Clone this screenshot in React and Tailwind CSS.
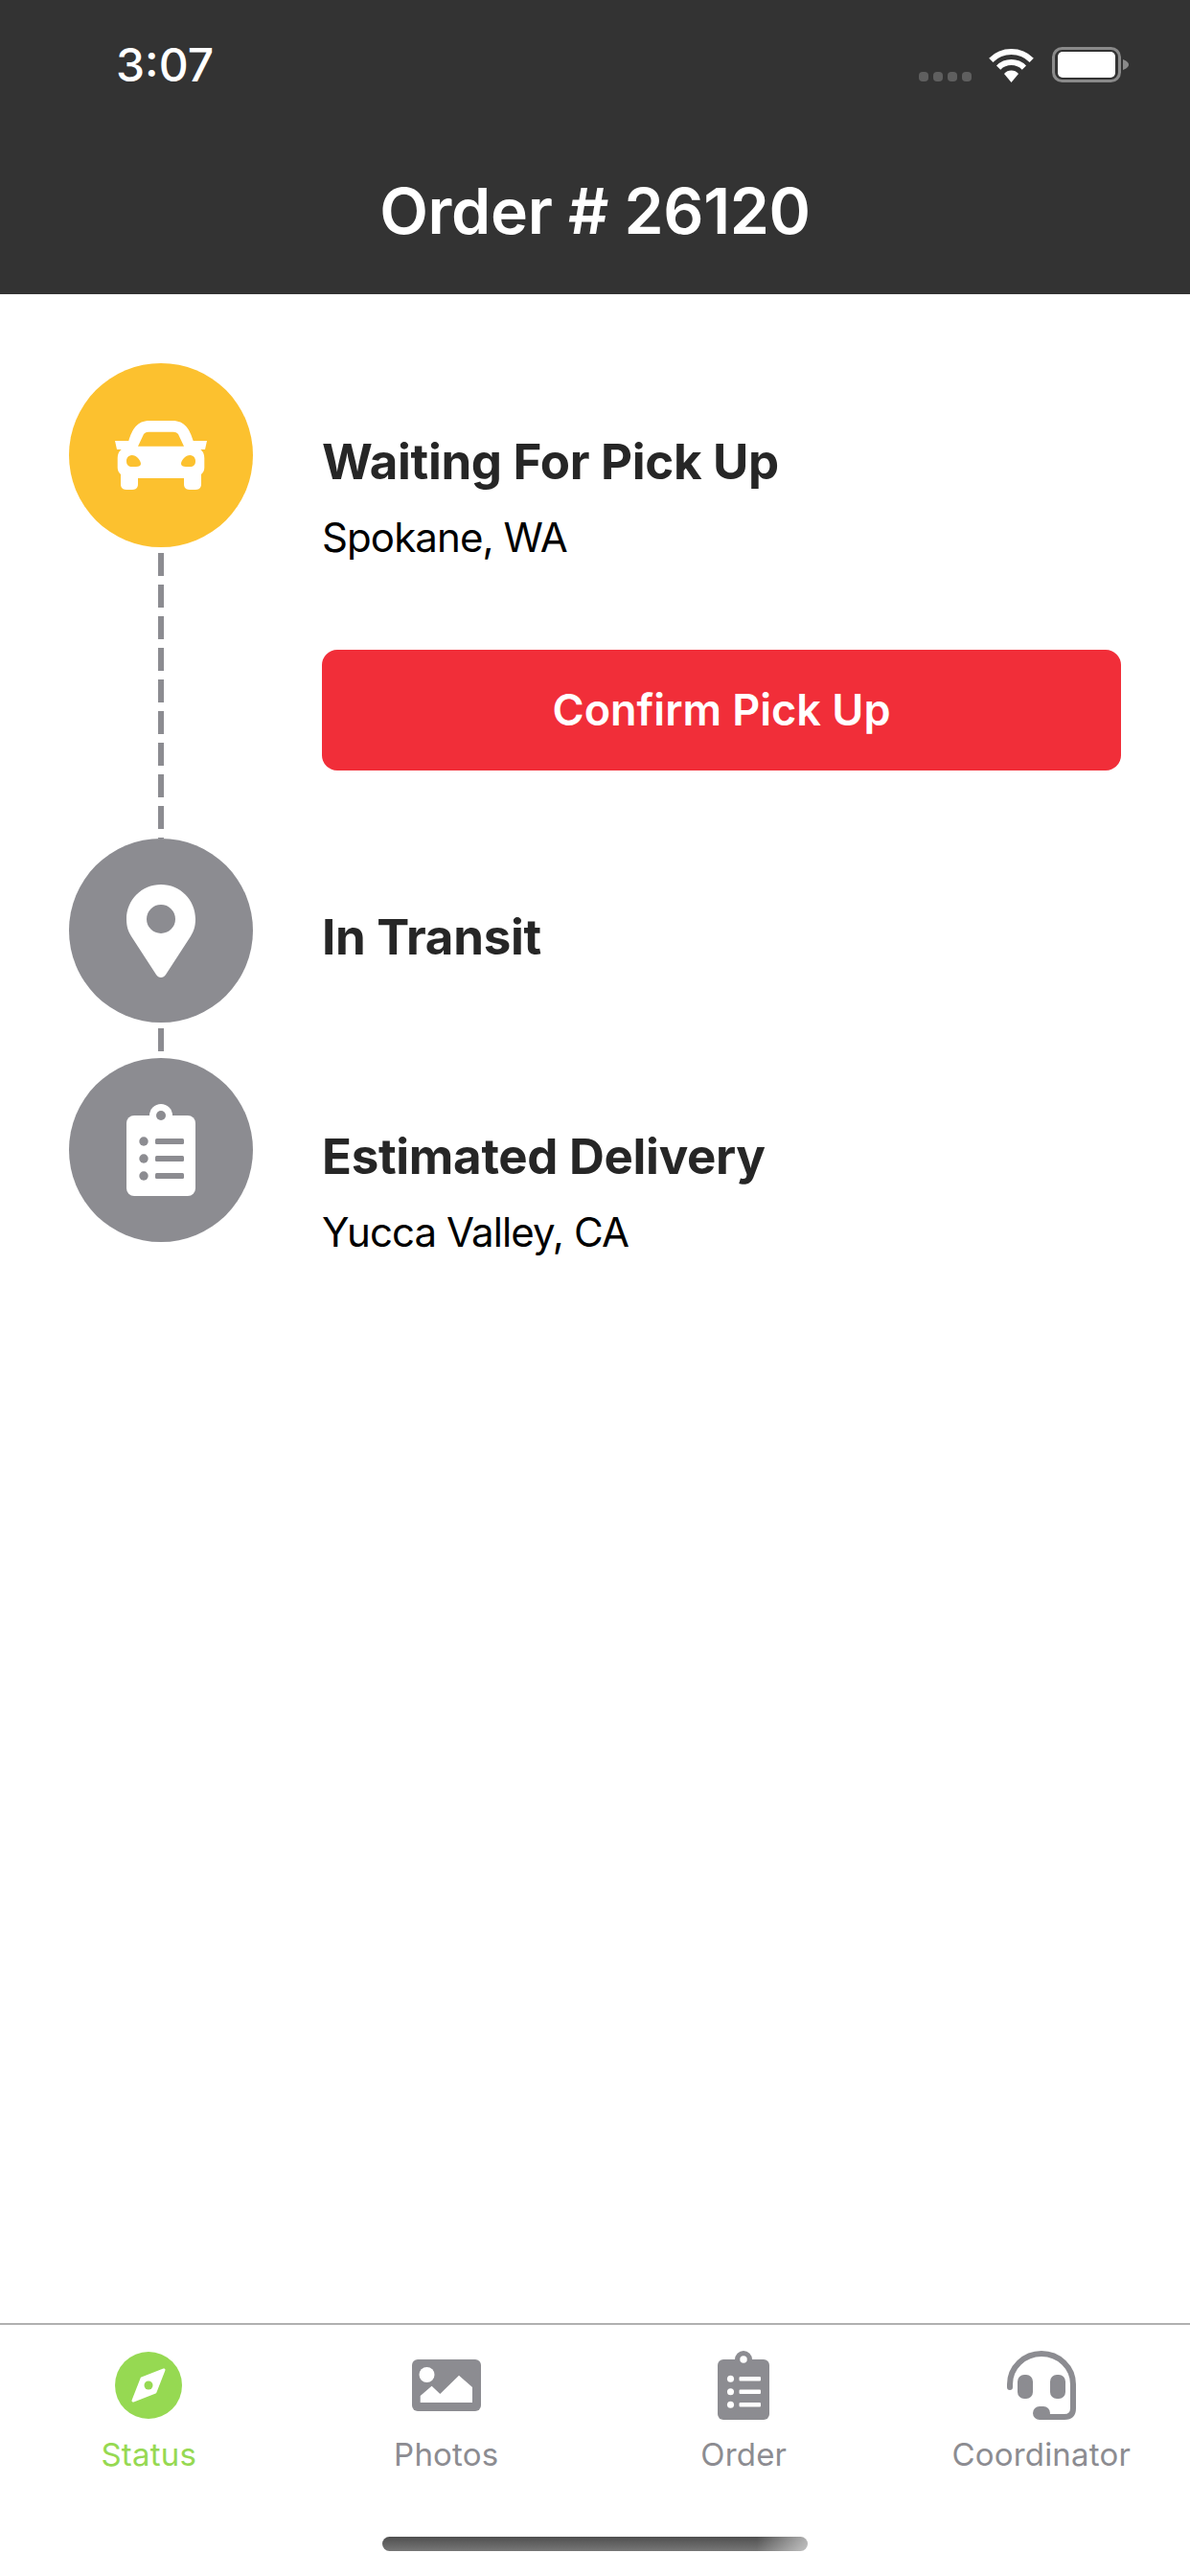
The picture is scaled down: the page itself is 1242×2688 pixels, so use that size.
import React from "react";

function CarIcon() {
  return (
    <svg width="96" height="72" viewBox="0 0 96 72">
      <path
        fill="#fff"
        fillRule="evenodd"
        d="M14.3 21 C18 9 23 0 36 0 H60 C73 0 78 9 81.7 21 H96 L94 30 H89.3 C92 32 93.3 35 93.3 39 V49 C93.3 52 92 54 90 56 V66 C90 70 88 72 84 72 H78 C74 72 72 70 72 66 V60 H24 V66 C24 70 22 72 18 72 H12 C8 72 6 70 6 66 V56 C4 54 2.7 52 2.7 49 V39 C2.7 35 4 32 6.7 30 H2 L0 21 Z
        M24 26.7 H72 L66 14 C64.5 12.5 63 11.7 61 11.7 H35 C33 11.7 31.5 12.5 30 14 Z
        M12 42 C12 38 15 36 18 36 C22 36 27 41 27 45 C27 47 25 48 22 48 H18 C14 48 12 46 12 42 Z
        M84 42 C84 38 81 36 78 36 C74 36 69 41 69 45 C69 47 71 48 74 48 H78 C82 48 84 46 84 42 Z"
      />
    </svg>
  );
}

function PinIcon() {
  return (
    <svg width="72" height="97" viewBox="0 0 72 97">
      <path
        fill="#fff"
        fillRule="evenodd"
        d="M36 0 C16 0 0 16 0 36 C0 44 2 49 5 54 L31 94 C33.5 98 38.5 98 41 94 L67 54 C70 49 72 44 72 36 C72 16 56 0 36 0 Z M36 21 A15 15 0 1 1 36 51 A15 15 0 1 1 36 21 Z"
      />
    </svg>
  );
}

// same clipboard in the timeline and in the tab bar, only scale and colours differ
function ClipboardIcon({ width, height, body, hole }) {
  return (
    <svg width={width} height={height} viewBox="0 0 72 96">
      <circle cx="36" cy="12" r="12" fill={body} />
      <rect x="0" y="12" width="72" height="84" rx="8" fill={body} />
      <circle cx="36" cy="12" r="5" fill={hole} />
      {[39, 57, 75].map((y) => (
        <g key={y} fill={hole}>
          <circle cx="18" cy={y} r="4.7" />
          <rect x="30" y={y - 3} width="30" height="6" rx="1.5" />
        </g>
      ))}
    </svg>
  );
}

function CompassIcon() {
  return (
    <svg width="70" height="70" viewBox="0 0 70 70">
      <circle cx="35" cy="35" r="35" fill="#96d952" />
      <path d="M51 19 L28 28 L19 51 L42 42 Z" fill="#fff" stroke="#fff" strokeWidth="3" strokeLinejoin="round" />
      <circle cx="35" cy="35" r="4.5" fill="#96d952" />
    </svg>
  );
}

function PhotoIcon() {
  return (
    <svg width="72" height="54" viewBox="0 0 72 54">
      <rect width="72" height="54" rx="6" fill="#8c8c91" />
      <circle cx="15.5" cy="16" r="8" fill="#fff" />
      <path d="M8.7 38 L20.6 27.7 L29.3 36 L49 16.7 L63 29 V45 H8.7 Z" fill="#fff" />
    </svg>
  );
}

function HeadsetIcon() {
  return (
    <svg width="72" height="72" viewBox="0 0 72 72">
      <path
        d="M3 38 V35 A33 32 0 0 1 69 35 V60 Q69 69 60 69 H36"
        fill="none"
        stroke="#8c8c91"
        strokeWidth="6"
        strokeLinecap="round"
      />
      <rect x="11" y="25" width="16" height="25" rx="7" fill="#8c8c91" />
      <rect x="45" y="25" width="16" height="25" rx="7" fill="#8c8c91" />
      <rect x="27" y="58" width="18" height="14" rx="7" fill="#8c8c91" />
    </svg>
  );
}

function WifiIcon() {
  return (
    <svg width="49" height="36" viewBox="0 0 49 36">
      <g fill="none" stroke="#fff" strokeWidth="6">
        <path d="M3.3 12.8 A30 30 0 0 1 45.7 12.8" />
        <path d="M11.1 20.6 A19 19 0 0 1 37.9 20.6" />
      </g>
      <path d="M24.5 36 L17 27 A10 10 0 0 1 32 27 Z" fill="#fff" />
    </svg>
  );
}

function BatteryIcon() {
  return (
    <svg width="80" height="37" viewBox="0 0 80 37">
      <rect x="1.5" y="1.5" width="69" height="34" rx="9" fill="none" stroke="#8a8a8a" strokeWidth="3" />
      <rect x="6" y="5" width="60" height="27" rx="5" fill="#fff" />
      <path d="M74 13 C77 14 80 16 80 18.5 C80 21 77 23 74 24 Z" fill="#8a8a8a" />
    </svg>
  );
}

function Circle({ color, children }) {
  return (
    <div className={`w-[192px] h-[192px] rounded-full flex items-center justify-center shrink-0 ${color}`}>
      {children}
    </div>
  );
}

function Dashes({ count, height }) {
  return (
    <div className="flex flex-col items-center gap-[9px] overflow-hidden mt-[6px]" style={{ height }}>
      {Array.from({ length: count }).map((_, i) => (
        <div key={i} className="w-[6px] h-[24px] shrink-0 bg-[#8c8c91]" />
      ))}
    </div>
  );
}

const tabs = [
  { label: "Status", icon: <CompassIcon />, active: true },
  { label: "Photos", icon: <PhotoIcon /> },
  { label: "Order", icon: <ClipboardIcon width={54} height={72} body="#8c8c91" hole="#fff" /> },
  { label: "Coordinator", icon: <HeadsetIcon /> },
];

export default function App() {
  return (
    <div className="w-[1242px] h-[2688px] flex flex-col bg-white font-['Inter',sans-serif]">
      <header className="h-[307px] shrink-0 bg-[#333333] flex flex-col text-white">
        <div className="flex items-center justify-between pl-[121px] pr-[64px] pt-[49px]">
          <span className="text-[48px] leading-[37px] font-medium">3:07</span>
          <div className="flex items-center">
            <div className="flex gap-[5px] mt-[24px] mr-[17px]">
              <div className="w-[10px] h-[10px] rounded-[4px] bg-[#5f5f5f]" />
              <div className="w-[10px] h-[10px] rounded-[4px] bg-[#5f5f5f]" />
              <div className="w-[10px] h-[10px] rounded-[4px] bg-[#5f5f5f]" />
              <div className="w-[10px] h-[10px] rounded-[4px] bg-[#5f5f5f]" />
            </div>
            <div className="mr-[18px] flex"><WifiIcon /></div>
            <BatteryIcon />
          </div>
        </div>
        <h1 className="mt-[98px] text-center text-[66px] leading-[72px] font-semibold tracking-[-0.3px]">Order # 26120</h1>
      </header>

      <main className="flex-1 pt-[72px] px-[72px]">
        <div className="flex gap-[72px]">
          <div className="flex flex-col w-[192px] shrink-0">
            <Circle color="bg-[#fcc12f]"><CarIcon /></Circle>
            <Dashes count={10} height="298px" />
          </div>
          <div className="flex-1 pt-[73px]">
            <div className="text-[51px] leading-[60px] font-bold tracking-[-0.3px] text-[#262626]">Waiting For Pick Up</div>
            <div className="mt-[24px] text-[42px] leading-[50px] tracking-[-0.9px] text-black">Spokane, WA</div>
            <button className="mt-[92px] w-[834px] h-[126px] rounded-[16px] bg-[#f12e39] text-white text-[45px] font-semibold">
              Confirm Pick Up
            </button>
          </div>
        </div>

        <div className="flex gap-[72px]">
          <div className="flex flex-col w-[192px] shrink-0">
            <Circle color="bg-[#8c8c91]"><PinIcon /></Circle>
            <Dashes count={1} height="24px" />
          </div>
          <div className="flex-1 pt-[73px]">
            <div className="text-[51px] leading-[60px] font-bold tracking-[-0.3px] text-[#262626]">In Transit</div>
          </div>
        </div>

        <div className="flex gap-[72px] mt-[7px]">
          <Circle color="bg-[#8c8c91]">
            <ClipboardIcon width={72} height={96} body="#fff" hole="#8c8c91" />
          </Circle>
          <div className="flex-1 pt-[73px]">
            <div className="text-[51px] leading-[60px] font-bold tracking-[-0.3px] text-[#262626]">Estimated Delivery</div>
            <div className="mt-[24px] text-[42px] leading-[50px] tracking-[-0.9px] text-black">Yucca Valley, CA</div>
          </div>
        </div>
      </main>

      <nav className="h-[264px] shrink-0 border-t-2 border-[#b0b0b0] flex flex-col">
        <div className="grid grid-cols-4 pt-[27px]">
          {tabs.map((tab) => (
            <div key={tab.label} className="flex flex-col items-center">
              <div className="h-[72px] flex items-center justify-center">{tab.icon}</div>
              <span className={`mt-[16px] text-[33px] leading-[40px] tracking-[0.2px] ${tab.active ? "text-[#96d952]" : "text-[#8c8c91]"}`}>
                {tab.label}
              </span>
            </div>
          ))}
        </div>
        <div className="mt-[66px] mx-auto w-[444px] h-[15px] rounded-full bg-[linear-gradient(90deg,transparent_88%,rgba(255,255,255,0.55)_100%),linear-gradient(180deg,#4f4f4f,#777777)]" />
      </nav>
    </div>
  );
}
